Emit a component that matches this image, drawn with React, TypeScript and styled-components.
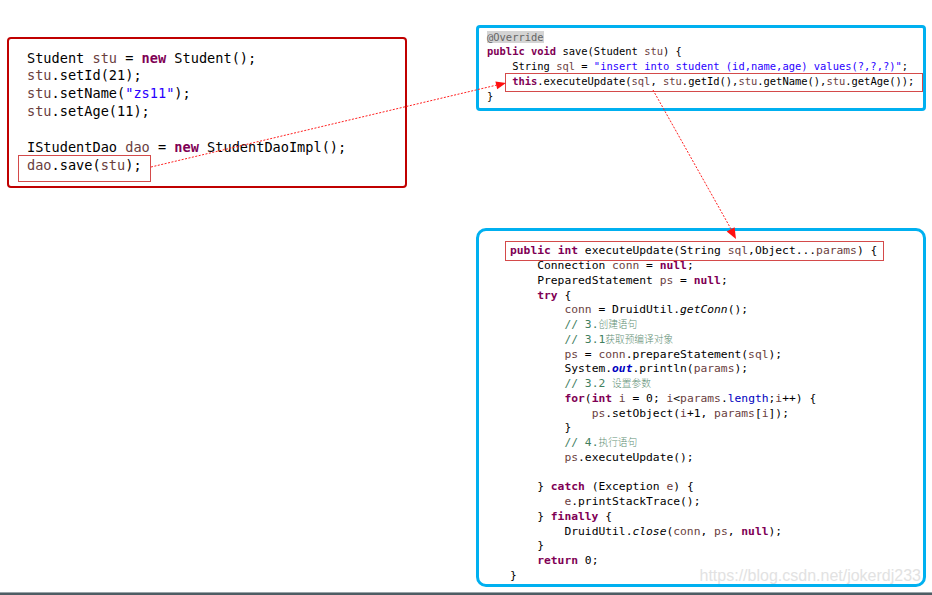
import React from 'react';
import styled, { createGlobalStyle } from 'styled-components';

const GlobalStyle = createGlobalStyle`
  html, body {
    margin: 0;
    padding: 0;
    background: #ffffff;
  }
  * {
    box-sizing: border-box;
  }
`;

const App: React.FC = () => {
  return (
    <Page>
      <GlobalStyle />
      <Canvas>
        <LeftColumn>
          <CallerBox>
            <Code $size={13.6} $lead={17.9}>
              <Line>
                Student <Var>stu</Var> = <Kw>new</Kw> Student();
              </Line>
              <Line>
                <Var>stu</Var>.setId(21);
              </Line>
              <Line>
                <Var>stu</Var>.setName(<Str>"zs11"</Str>);
              </Line>
              <Line>
                <Var>stu</Var>.setAge(11);
              </Line>
              <Line>{'\u00a0'}</Line>
              <Line>
                IStudentDao <Var>dao</Var> = <Kw>new</Kw> StudentDaoImpl();
              </Line>
              <Line>
                <Mark $pad="1px 8px 6px 8px" $pull="-2px -9px -7px -9px">
                  <Var>dao</Var>.save(<Var>stu</Var>);
                </Mark>
              </Line>
            </Code>
          </CallerBox>
        </LeftColumn>

        <RightColumn>
          <MethodBox $top={25} $height={86} $radius={4} $pad="1.8px 4px 0 8px">
            <Code $size={10.45} $lead={14.7}>
              <Line>
                <Annot>@Override</Annot>
              </Line>
              <Line>
                <Kw>public</Kw> <Kw>void</Kw> save(Student <Var>stu</Var>) {'{'}
              </Line>
              <Line>
                {'    '}String <Var>sql</Var> = <Str>"insert into student (id,name,age) values(?,?,?)"</Str>;
              </Line>
              <Line>
                {'    '}
                <Mark $pad="0px 8px 2px 6px" $pull="-1px -9px -3px -7px">
                  <Kw>this</Kw>.executeUpdate(<Var>sql</Var>, <Var>stu</Var>.getId(),<Var>stu</Var>.getName(),
                  <Var>stu</Var>.getAge());
                </Mark>
              </Line>
              <Line>{'}'}</Line>
            </Code>
          </MethodBox>

          <MethodBox $top={117} $height={359} $radius={10} $pad="13.4px 4px 0 31px">
            <Code $size={11.3} $lead={14.75}>
              <Line>
                <Mark $pad="2.4px 6px 0.8px 4px" $pull="-3.4px -7px -1.8px -5px">
                  <Kw>public</Kw> <Kw>int</Kw> executeUpdate(String <Var>sql</Var>,Object...<Var>params</Var>) {'{'}
                </Mark>
              </Line>
              <Line>
                {'    '}Connection <Var>conn</Var> = <Kw>null</Kw>;
              </Line>
              <Line>
                {'    '}PreparedStatement <Var>ps</Var> = <Kw>null</Kw>;
              </Line>
              <Line>
                {'    '}
                <Kw>try</Kw> {'{'}
              </Line>
              <Line>
                {'        '}
                <Var>conn</Var> = DruidUtil.<Static>getConn</Static>();
              </Line>
              <Line>
                {'        '}
                <Cmt>
                  // 3.<Cn>创建语句</Cn>
                </Cmt>
              </Line>
              <Line>
                {'        '}
                <Cmt>
                  // 3.1<Cn>获取预编译对象</Cn>
                </Cmt>
              </Line>
              <Line>
                {'        '}
                <Var>ps</Var> = <Var>conn</Var>.prepareStatement(<Var>sql</Var>);
              </Line>
              <Line>
                {'        '}System.<Field $italic>out</Field>.println(<Var>params</Var>);
              </Line>
              <Line>
                {'        '}
                <Cmt>
                  // 3.2 <Cn>设置参数</Cn>
                </Cmt>
              </Line>
              <Line>
                {'        '}
                <Kw>for</Kw>(<Kw>int</Kw> <Var>i</Var> = 0; <Var>i</Var>&lt;<Var>params</Var>.<Field>length</Field>;
                <Var>i</Var>++) {'{'}
              </Line>
              <Line>
                {'            '}
                <Var>ps</Var>.setObject(<Var>i</Var>+1, <Var>params</Var>[<Var>i</Var>]);
              </Line>
              <Line>{'        }'}</Line>
              <Line>
                {'        '}
                <Cmt>
                  // 4.<Cn>执行语句</Cn>
                </Cmt>
              </Line>
              <Line>
                {'        '}
                <Var>ps</Var>.executeUpdate();
              </Line>
              <Line>{'\u00a0'}</Line>
              <Line>
                {'    } '}
                <Kw>catch</Kw> (Exception <Var>e</Var>) {'{'}
              </Line>
              <Line>
                {'        '}
                <Var>e</Var>.printStackTrace();
              </Line>
              <Line>
                {'    } '}
                <Kw>finally</Kw> {'{'}
              </Line>
              <Line>
                {'        '}DruidUtil.<Static>close</Static>(<Var>conn</Var>, <Var>ps</Var>, <Kw>null</Kw>);
              </Line>
              <Line>{'    }'}</Line>
              <Line>
                {'    '}
                <Kw>return</Kw> 0;
              </Line>
              <Line>{'}'}</Line>
            </Code>
          </MethodBox>
        </RightColumn>
      </Canvas>
      <BottomBar />

      <Arrows width="932" height="595" viewBox="0 0 932 595">
        <line x1="151" y1="167" x2="497" y2="85" stroke="#ff2020" strokeWidth="1" strokeDasharray="2 1.5" />
        <polygon points="506,83 497.2,89.2 495.4,81.4" fill="#ff1010" />
        <line x1="653" y1="90" x2="731" y2="229" stroke="#ff2020" strokeWidth="1" strokeDasharray="2 1.5" />
        <polygon points="736,239 734.6,227.2 726.7,231.6" fill="#ff1010" />
      </Arrows>
      <Watermark>https://blog.csdn.net/jokerdj233</Watermark>
    </Page>
  );
};

const Page = styled.div`
  position: relative;
  width: 932px;
  height: 595px;
  overflow: hidden;
  display: flex;
  flex-direction: column;
  background: #ffffff;
`;

const Canvas = styled.div`
  flex: 1;
  display: flex;
`;

const LeftColumn = styled.div`
  width: 476px;
  padding: 37px 0 0 7px;
`;

const RightColumn = styled.div`
  width: 450px;
  display: flex;
  flex-direction: column;
`;

const CallerBox = styled.div`
  width: 400px;
  height: 151px;
  border: 2px solid #c00000;
  border-radius: 4px;
  padding: 10.5px 8px 0 18px;
`;

const MethodBox = styled.div<{ $top: number; $height: number; $radius: number; $pad: string }>`
  margin-top: ${({ $top }) => $top}px;
  height: ${({ $height }) => $height}px;
  border: 3px solid #00b0f0;
  border-radius: ${({ $radius }) => $radius}px;
  padding: ${({ $pad }) => $pad};
`;

const Code = styled.div<{ $size: number; $lead: number }>`
  font-family: 'DejaVu Sans Mono', 'Liberation Mono', monospace;
  font-size: ${({ $size }) => $size}px;
  line-height: ${({ $lead }) => $lead}px;
  color: #000000;

  & > div {
    height: ${({ $lead }) => $lead}px;
  }
`;

const Line = styled.div`
  white-space: pre;
`;

const Kw = styled.span`
  color: #7f0055;
  font-weight: bold;
`;

const Var = styled.span`
  color: #6a3e3e;
`;

const Str = styled.span`
  color: #2a00ff;
`;

const Field = styled.span<{ $italic?: boolean }>`
  color: #0000c0;
  font-style: ${({ $italic }) => ($italic ? 'italic' : 'normal')};
  font-weight: ${({ $italic }) => ($italic ? 'bold' : 'normal')};
`;

const Static = styled.span`
  font-style: italic;
`;

const Cmt = styled.span`
  color: #3f7f5f;
`;

const Cn = styled.span`
  font-family: 'Noto Sans CJK SC', sans-serif;
  font-size: 0.86em;
  line-height: 1;
  font-weight: 300;
  color: #5f8f75;
`;

const Annot = styled.span`
  color: #646464;
  background: #d4d4d4;
`;

const Mark = styled.span<{ $pad: string; $pull: string }>`
  display: inline-block;
  border: 1px solid #d44a4a;
  padding: ${({ $pad }) => $pad};
  margin: ${({ $pull }) => $pull};
`;

const BottomBar = styled.div`
  height: 3px;
  border-top: 1px solid #9aa4a9;
  background: #4e5d64;
`;

const Arrows = styled.svg`
  position: absolute;
  top: 0;
  left: 0;
  pointer-events: none;
`;

const Watermark = styled.div`
  position: absolute;
  right: 11px;
  bottom: 10px;
  font-family: 'Liberation Sans', Arial, sans-serif;
  font-size: 16px;
  color: #e2e2e2;
  pointer-events: none;
`;

export default App;
